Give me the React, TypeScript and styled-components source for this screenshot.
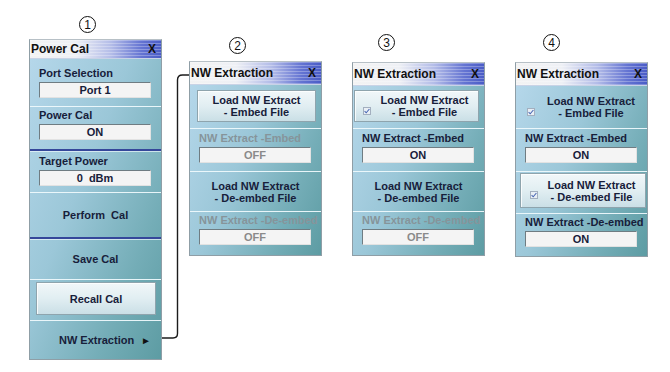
import React from 'react';
import styled, { createGlobalStyle, css } from 'styled-components';

const colors = {
  text: '#17203a',
  dim: '#86949a',
  dimValue: '#8a8a8a',
  border: '#8f9ea6',
  line: 'rgba(238, 249, 252, 0.95)',
  blueLine: '#35479a',
  wire: '#1c1c1c',
};

const GlobalStyle = createGlobalStyle`
  html, body {
    margin: 0;
    padding: 0;
    background: #ffffff;
    font-family: "Liberation Sans", Arial, sans-serif;
  }
`;

type LineKind = 'light' | 'blue' | 'none';

function Tick() {
  return (
    <CheckBox>
      <svg width="8" height="8" viewBox="0 0 8 8">
        <path d="M1.6 4.2 L3.2 5.8 L6.4 2" fill="none" stroke="#4a68b4" strokeWidth="1.1" />
      </svg>
    </CheckBox>
  );
}

function Title({ text, h }: { text: string; h: number }) {
  return (
    <TitleBar $h={h}>
      <TitleText>{text}</TitleText>
      <Close>X</Close>
    </TitleBar>
  );
}

function Field({ label, value, dim, h, pt, line }: {
  label: string; value: string; dim?: boolean; h: number; pt: number; line: LineKind;
}) {
  return (
    <Section $h={h} $pt={pt} $line={line}>
      <Label $dim={dim}>{label}</Label>
      <ValueBox $dim={dim}>{value}</ValueBox>
    </Section>
  );
}

function LoadText({ kind }: { kind: string }) {
  return (
    <CmdText>
      <span>Load NW Extract</span>
      <span>- {kind} File</span>
    </CmdText>
  );
}

function App() {
  return (
    <>
      <GlobalStyle />
      <Page>
        <Column $top={16}>
          <Step $left={50} $mb={6}>1</Step>
          <Panel>
            <Title text="Power Cal" h={19} />
            <Body>
              <Field label="Port Selection" value="Port 1" h={48} pt={7} line="light" />
              <Field label="Power Cal" value="ON" h={44} pt={1} line="blue" />
              <Field label="Target Power" value={'0\u00a0 dBm'} h={42} pt={3} line="light" />
              <Section $h={46} $line="blue" $center>
                <CmdText>Perform&nbsp; Cal</CmdText>
              </Section>
              <Section $h={41} $line="light" $center>
                <CmdText>Save Cal</CmdText>
              </Section>
              <Section $h={41} $line="light" $pt={2}>
                <CmdButton $h={33} $ml={6} $mr={5}>
                  <CmdText>Recall Cal</CmdText>
                </CmdButton>
              </Section>
              <Section $h={38} $line="none" $center>
                <MenuRow>
                  <CmdText>NW Extraction</CmdText>
                  <Arrow>&#9658;</Arrow>
                </MenuRow>
              </Section>
            </Body>
          </Panel>
        </Column>

        <Wire width="27" height="372" viewBox="0 0 27 372">
          <path
            d="M0 338 H11 Q15.5 338 15.5 333.5 V80 Q15.5 75 20.5 75 H27"
            fill="none"
            stroke={colors.wire}
            strokeWidth="1.4"
          />
        </Wire>

        <Column $top={37}>
          <Step $left={40} $mb={7}>2</Step>
          <Panel>
            <Title text="NW Extraction" h={23} />
            <Body>
              <Section $h={44} $line="light" $pt={5}>
                <CmdButton $h={32} $ml={7} $mr={5}>
                  <LoadText kind="Embed" />
                </CmdButton>
              </Section>
              <Field label="NW Extract -Embed" value="OFF" dim h={43} pt={2} line="light" />
              <Section $h={40} $line="light" $center>
                <LoadText kind="De-embed" />
              </Section>
              <Field label="NW Extract -De-embed" value="OFF" dim h={43} pt={1} line="none" />
            </Body>
          </Panel>
        </Column>

        <Column $top={34} $ml={30}>
          <Step $left={26} $mb={11}>3</Step>
          <Panel>
            <Title text="NW Extraction" h={23} />
            <Body>
              <Section $h={43} $line="light" $pt={4}>
                <CmdButton $h={32} $ml={1} $mr={5} $pl={8}>
                  <Tick />
                  <LoadText kind="Embed" />
                </CmdButton>
              </Section>
              <Field label="NW Extract -Embed" value="ON" h={43} pt={2} line="light" />
              <Section $h={40} $line="light" $center>
                <LoadText kind="De-embed" />
              </Section>
              <Field label="NW Extract -De-embed" value="OFF" dim h={43} pt={1} line="none" />
            </Body>
          </Panel>
        </Column>

        <Column $top={34} $ml={30}>
          <Step $left={28} $mb={11}>4</Step>
          <Panel>
            <Title text="NW Extraction" h={23} />
            <Body>
              <Section $h={43} $line="light" $center>
                <PlainRow>
                  <Tick />
                  <LoadText kind="Embed" />
                </PlainRow>
              </Section>
              <Field label="NW Extract -Embed" value="ON" h={43} pt={2} line="light" />
              <Section $h={42} $line="light" $pt={1}>
                <CmdButton $h={35} $ml={4} $mr={1} $pl={9}>
                  <Tick />
                  <LoadText kind="De-embed" />
                </CmdButton>
              </Section>
              <Field label="NW Extract -De-embed" value="ON" h={42} pt={1} line="none" />
            </Body>
          </Panel>
        </Column>
      </Page>
    </>
  );
}

const Page = styled.div`
  display: flex;
  align-items: flex-start;
  width: 670px;
  height: 372px;
  padding-left: 29px;
  box-sizing: border-box;
  overflow: hidden;
`;

const Column = styled.div<{ $top: number; $ml?: number }>`
  display: flex;
  flex-direction: column;
  padding-top: ${(p) => p.$top}px;
  margin-left: ${(p) => p.$ml ?? 0}px;
`;

const Step = styled.div<{ $left: number; $mb: number }>`
  width: 17px;
  height: 17px;
  box-sizing: border-box;
  border: 1px solid #111;
  border-radius: 50%;
  margin-left: ${(p) => p.$left}px;
  margin-bottom: ${(p) => p.$mb}px;
  display: flex;
  align-items: center;
  justify-content: center;
  font-size: 12px;
  line-height: 1;
  color: #111;
`;

const Panel = styled.div`
  width: 133px;
  box-sizing: border-box;
  border: 1px solid ${colors.border};
  border-top-color: #b7c0c6;
  overflow: hidden;
`;

const TitleBar = styled.div<{ $h: number }>`
  height: ${(p) => p.$h}px;
  display: flex;
  align-items: center;
  justify-content: space-between;
  padding: 0 5px 0 1px;
  border-bottom: 1px solid #c9d3e6;
  box-sizing: border-box;
  background:
    repeating-linear-gradient(to bottom, rgba(255, 255, 255, 0.28) 0 1px, transparent 1px 3px),
    linear-gradient(to right, #f3f3f3 0%, #eef0f5 35%, #b3bce8 62%, #6474d2 85%, #4a5cc6 100%);
`;

const TitleText = styled.span`
  font-size: 12px;
  font-weight: bold;
  color: #111;
  white-space: nowrap;
`;

const Close = styled.span`
  font-size: 12px;
  font-weight: bold;
  color: #111;
`;

const Body = styled.div`
  display: flex;
  flex-direction: column;
  background: linear-gradient(112deg, #b5d7ea 0%, #9bc7d8 40%, #74adb7 75%, #5d9ca3 100%);
`;

const lineStyles = {
  light: css`
    border-bottom: 1px solid ${colors.line};
  `,
  blue: css`
    border-bottom: 2px solid ${colors.blueLine};
    box-shadow: 0 1px 0 rgba(236, 248, 251, 0.7);
  `,
  none: css``,
};

const Section = styled.div<{ $h: number; $line: LineKind; $pt?: number; $center?: boolean }>`
  height: ${(p) => p.$h}px;
  box-sizing: border-box;
  padding-top: ${(p) => p.$pt ?? 0}px;
  display: flex;
  flex-direction: column;
  ${(p) =>
    p.$center &&
    css`
      align-items: center;
      justify-content: center;
    `}
  ${(p) => lineStyles[p.$line]}
`;

const Label = styled.div<{ $dim?: boolean }>`
  padding-left: 9px;
  font-size: 11px;
  line-height: 14px;
  font-weight: bold;
  white-space: nowrap;
  color: ${(p) => (p.$dim ? colors.dim : colors.text)};
`;

const ValueBox = styled.div<{ $dim?: boolean }>`
  margin: 2px 10px 0 9px;
  height: 16px;
  box-sizing: border-box;
  background: #f4f4f4;
  border: 1px solid #e2e2e2;
  border-top-color: #6f7c82;
  border-left-color: #6f7c82;
  display: flex;
  align-items: center;
  justify-content: center;
  font-size: 11px;
  font-weight: bold;
  white-space: pre;
  color: ${(p) => (p.$dim ? colors.dimValue : colors.text)};
`;

const CmdText = styled.div`
  display: flex;
  flex-direction: column;
  align-items: center;
  font-size: 11px;
  line-height: 12px;
  font-weight: bold;
  color: ${colors.text};
  white-space: nowrap;
`;

const CmdButton = styled.div<{ $h: number; $ml: number; $mr: number; $pl?: number }>`
  height: ${(p) => p.$h}px;
  margin: 0 ${(p) => p.$mr}px 0 ${(p) => p.$ml}px;
  padding-left: ${(p) => p.$pl ?? 0}px;
  box-sizing: border-box;
  display: flex;
  align-items: center;
  justify-content: center;
  border: 1px solid #8ea4ad;
  box-shadow: inset 1px 1px 0 rgba(255, 255, 255, 0.8);
  background: linear-gradient(to bottom, #f1f7f9 0%, #e1eef2 50%, #cadfe6 100%);

  ${CmdText} {
    flex: 1;
  }
`;

const PlainRow = styled.div`
  align-self: stretch;
  display: flex;
  align-items: center;
  padding-left: 11px;

  ${CmdText} {
    flex: 1;
  }
`;

const CheckBox = styled.span`
  width: 8px;
  height: 8px;
  margin-top: 9px;
  flex: none;
  box-sizing: border-box;
  border: 1px solid #a3afbf;
  background: #e9eff5;
  display: flex;
  align-items: center;
  justify-content: center;

  svg {
    display: block;
    margin: -1px;
  }
`;

const MenuRow = styled.div`
  align-self: stretch;
  display: flex;
  align-items: center;
  padding: 0 10px 0 22px;

  ${CmdText} {
    flex: 1;
  }
`;

const Arrow = styled.span`
  font-size: 10px;
  color: #111;
`;

const Wire = styled.svg`
  flex: none;
  display: block;
`;

export default App;
